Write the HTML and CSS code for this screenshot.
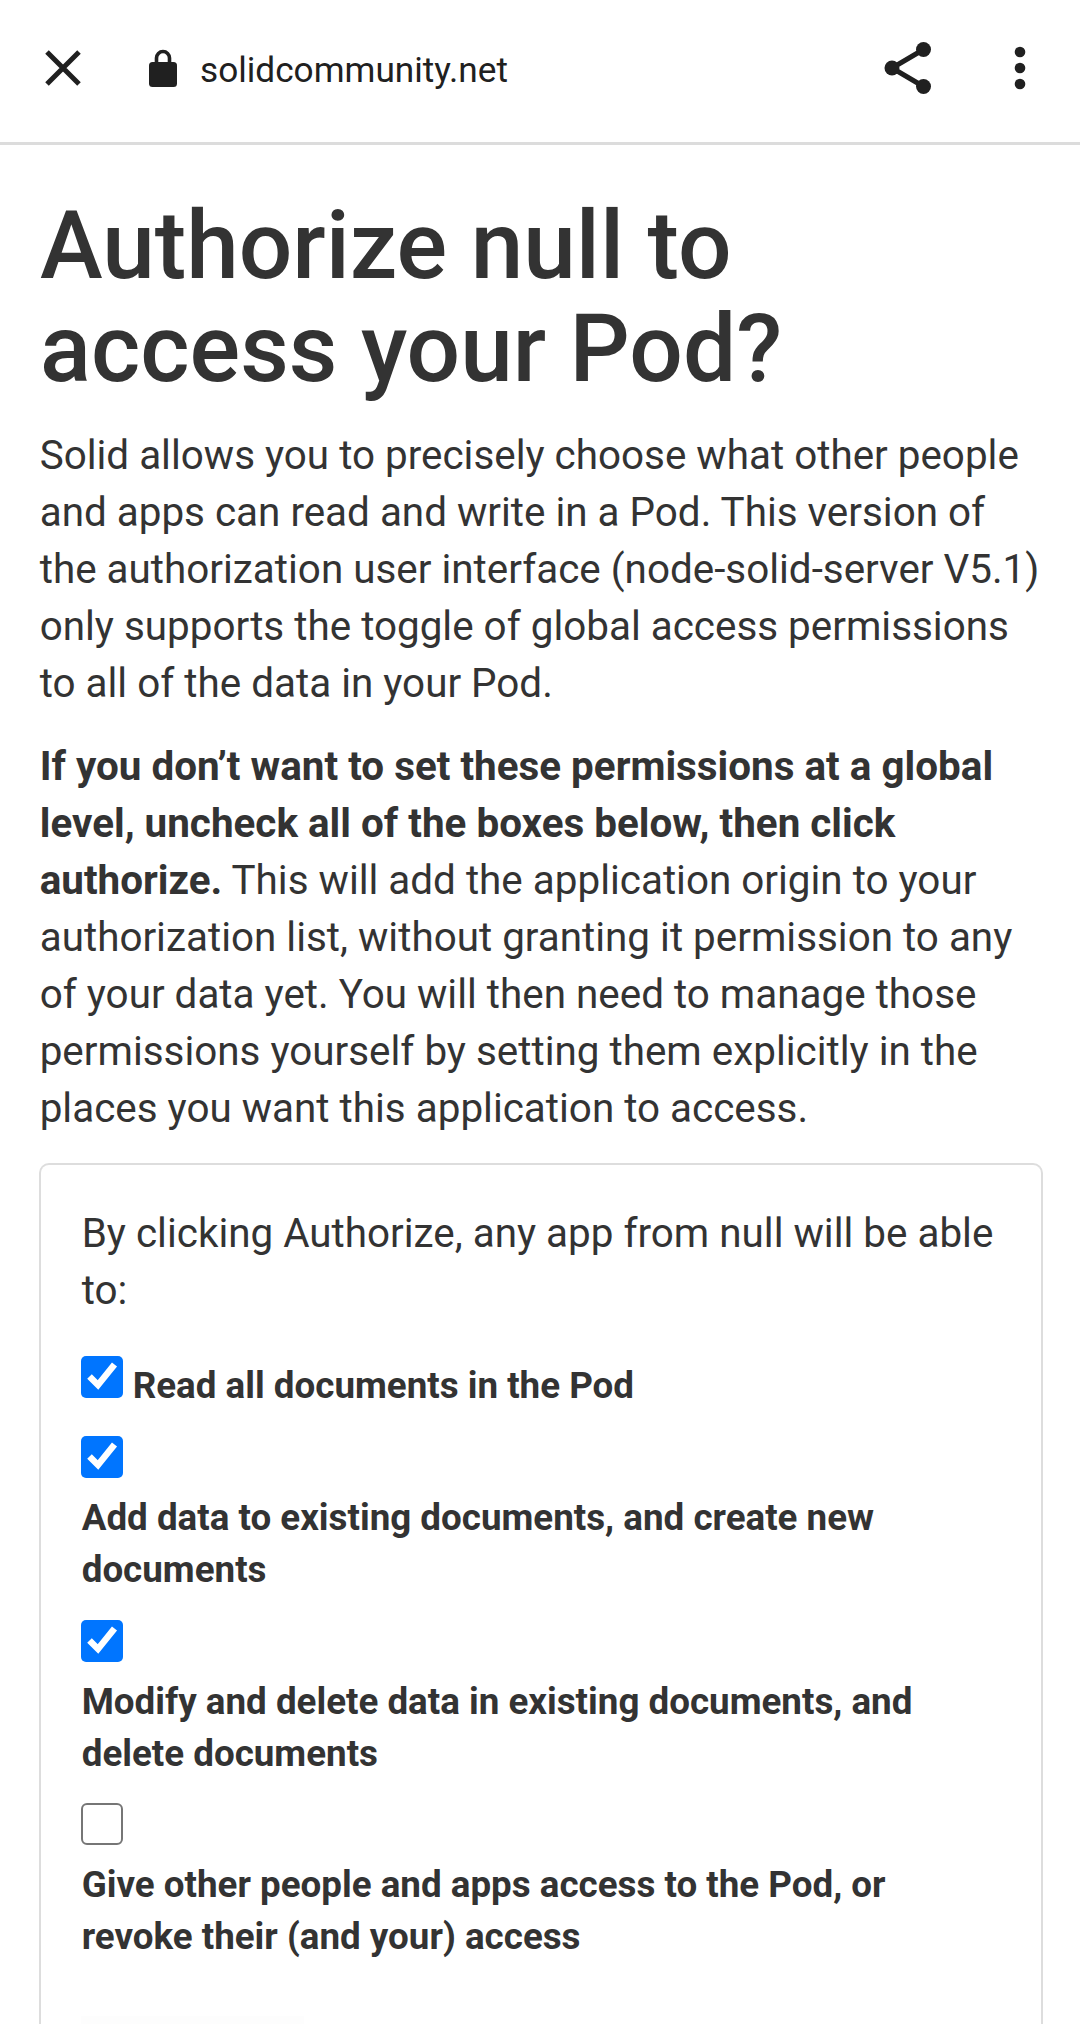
FILE: index.html
```html
<!DOCTYPE html>
<html lang="en">
<head>
<meta charset="utf-8">
<title>Authorize</title>
<link rel="stylesheet" href="styles.css">
</head>
<body>
<header class="bar">
  <svg class="close" viewBox="0 0 36 36"><path d="M2 2 34 34M34 2 2 34"/></svg>
  <svg class="lock" viewBox="0 0 28 38"><path d="M7.5 15V9a6.5 6.5 0 0 1 13 0v6"/><rect x="0" y="13" width="28" height="25" rx="3.5"/></svg>
  <span class="url">solidcommunity.net</span>
  <svg class="share" viewBox="0 0 48 52"><path d="M39.5 7.5 8 26 39.5 44.5"/><circle cx="39.5" cy="7.5" r="7.5"/><circle cx="8" cy="26" r="7.5"/><circle cx="39.5" cy="44.5" r="7.5"/></svg>
  <svg class="more" viewBox="0 0 12 44"><circle cx="6" cy="6" r="5.3"/><circle cx="6" cy="22" r="5.3"/><circle cx="6" cy="38" r="5.3"/></svg>
</header>
<main class="page">
  <h1 class="title">Authorize null to<br>access your Pod?</h1>
  <p class="text">Solid allows you to precisely choose what other people<br>and apps can read and write in a Pod. This version of<br>the authorization user interface (node-solid-server V5.1)<br>only supports the toggle of global access permissions<br>to all of the data in your Pod.</p>
  <p class="text"><strong>If you don’t want to set these permissions at a global<br>level, uncheck all of the boxes below, then click<br>authorize.</strong> This will add the application origin to your<br>authorization list, without granting it permission to any<br>of your data yet. You will then need to manage those<br>permissions yourself by setting them explicitly in the<br>places you want this application to access.</p>
  <form class="panel">
    <p class="text intro">By clicking Authorize, any app from null will be able<br>to:</p>
    <div class="option inline"><svg class="box" viewBox="0 0 42 42"><rect class="fill" width="42" height="42" rx="5"/><path class="tick" d="M8.5 20.5 17 29 33.5 8.5"/></svg><label class="label">Read all documents in the Pod</label></div>
    <div class="option"><svg class="box" viewBox="0 0 42 42"><rect class="fill" width="42" height="42" rx="5"/><path class="tick" d="M8.5 20.5 17 29 33.5 8.5"/></svg><label class="label">Add data to existing documents, and create new<br>documents</label></div>
    <div class="option"><svg class="box" viewBox="0 0 42 42"><rect class="fill" width="42" height="42" rx="5"/><path class="tick" d="M8.5 20.5 17 29 33.5 8.5"/></svg><label class="label">Modify and delete data in existing documents, and<br>delete documents</label></div>
    <div class="option"><svg class="box" viewBox="0 0 42 42"><rect class="empty" x="1" y="1" width="40" height="40" rx="5"/></svg><label class="label">Give other people and apps access to the Pod, or<br>revoke their (and your) access</label></div>
    <div class="action"></div>
  </form>
</main>
</body>
</html>
```
FILE: styles.css
```css
* { box-sizing: border-box; }
body { display: flex; flex-direction: column; margin: 0; height: 2024px; background: #fff; color: #333; font-family: Roboto, sans-serif; }
svg { display: block; flex: none; }
.bar { display: flex; flex: none; align-items: center; height: 145px; padding: 0 54px 6px 45px; border-bottom: 3px solid #dcdcdc; color: #202020; }
.close { width: 36px; height: 36px; fill: none; stroke: #202020; stroke-width: 5; }
.lock { width: 28px; height: 38px; margin-left: 68px; fill: #202020; }
.lock path { fill: none; stroke: #202020; stroke-width: 3.6; }
.url { margin: 4px 0 0 23px; font-size: 35.2px; line-height: 48px; }
.share { width: 48px; height: 52px; margin-left: auto; fill: #202020; }
.share path { fill: none; stroke: #202020; stroke-width: 5; }
.more { width: 12px; height: 44px; margin-left: 82px; fill: #202020; }
.page { display: flex; flex: 1; flex-direction: column; padding: 49px 37px 0 39px; }
.title { margin: 0 0 27px 1px; font-size: 94.5px; font-weight: 500; line-height: 103px; white-space: nowrap; }
.text { margin: 0 0 26px; padding-left: 0.7px; font-size: 40.4px; line-height: 57px; white-space: nowrap; }
.panel { flex: 1; padding: 40px 40px 0; border: 2px solid #ddd; border-bottom: 0; border-radius: 10px 10px 0 0; }
.intro { margin-bottom: 37px; }
.option { display: flex; flex-direction: column; gap: 14px; margin-bottom: 23.5px; }
.inline { flex-direction: row; gap: 9px; margin-bottom: 24px; }
.box { width: 42px; height: 42px; }
.fill { fill: #0075ff; }
.tick { fill: none; stroke: #fff; stroke-width: 6.5; }
.empty { fill: #fff; stroke: #767676; stroke-width: 2; }
.label { padding-left: 0.7px; font-size: 36.75px; line-height: 52px; font-weight: 700; white-space: nowrap; }
.inline .label { padding-top: 4px; }
.action { width: 223px; height: 8px; margin-top: 53px; background: #fdfdfd; }
```
